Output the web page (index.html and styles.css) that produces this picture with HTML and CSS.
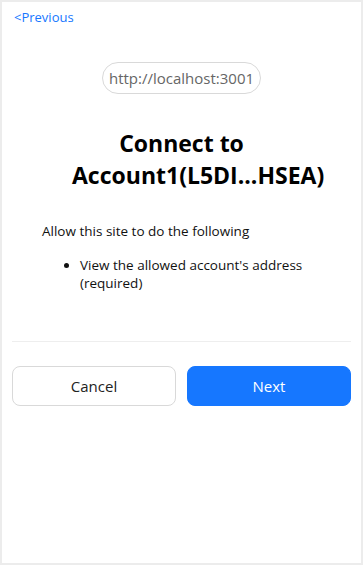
FILE: index.html
```html
<!DOCTYPE html>
<html lang="en">
<head>
  <meta charset="UTF-8">
  <meta name="viewport" content="width=device-width, initial-scale=1.0">
  <title>Connect</title>
  <link rel="stylesheet" href="styles.css">
</head>
<body>
  <div class="frame">
    <a class="back-link" href="#">&lt;Previous</a>

    <!-- Origin requesting access -->
    <div class="origin">
      <span class="origin-pill">http://localhost:3001</span>
    </div>

    <h1 class="title">Connect to Account1(L5DI...HSEA)</h1>

    <div class="permissions">
      <p>Allow this site to do the following</p>
      <ul>
        <li>View the allowed account's address (required)</li>
      </ul>
    </div>

    <hr class="divider">

    <div class="actions">
      <button class="btn btn-default">Cancel</button>
      <button class="btn btn-primary">Next</button>
    </div>
  </div>
</body>
</html>
```

FILE: styles.css
```css
/* General styles */
* {
  box-sizing: border-box;
}

body {
  margin: 0;
  font-family: 'Open Sans', 'Noto Sans', sans-serif;
  color: #000;
  background: #fff;
}

.frame {
  height: 565px;
  border: 2px solid #ececec;
  padding: 3px 10px 10px;
}

.back-link {
  display: inline-block;
  margin-left: 2px;
  font-size: 13px;
  line-height: 20px;
  color: #1677ff;
  text-decoration: none;
}

/* Origin pill */
.origin {
  display: flex;
  justify-content: center;
  margin-top: 35px;
}

.origin-pill {
  display: inline-block;
  border: 1px solid #d9d9d9;
  border-radius: 16px;
  padding: 0 6px;
  font-size: 15px;
  line-height: 30px;
  color: #666;
}

.title {
  margin: 33px 60px 0;
  font-size: 23px;
  font-weight: 700;
  line-height: 32px;
  text-align: center;
}

/* Permission list */
.permissions {
  margin-top: 31px;
  padding-left: 30px;
  font-size: 13.5px;
  line-height: 18px;
  color: #111;
}

.permissions p {
  margin: 0;
}

.permissions ul {
  margin: 16px 0 0;
  padding-left: 38px;
}

.divider {
  margin: 49px 0 0;
  border: 0;
  border-top: 1px solid #eeeeee;
}

/* Buttons */
.actions {
  display: flex;
  gap: 11px;
  margin-top: 24px;
}

.btn {
  flex: 1;
  height: 40px;
  border-radius: 8px;
  font-family: inherit;
  font-size: 15px;
  cursor: pointer;
}

.btn-default {
  background: #fff;
  border: 1px solid #d9d9d9;
  color: #222;
}

.btn-primary {
  background: #1677ff;
  border: 1px solid #1677ff;
  color: #fff;
}
```
